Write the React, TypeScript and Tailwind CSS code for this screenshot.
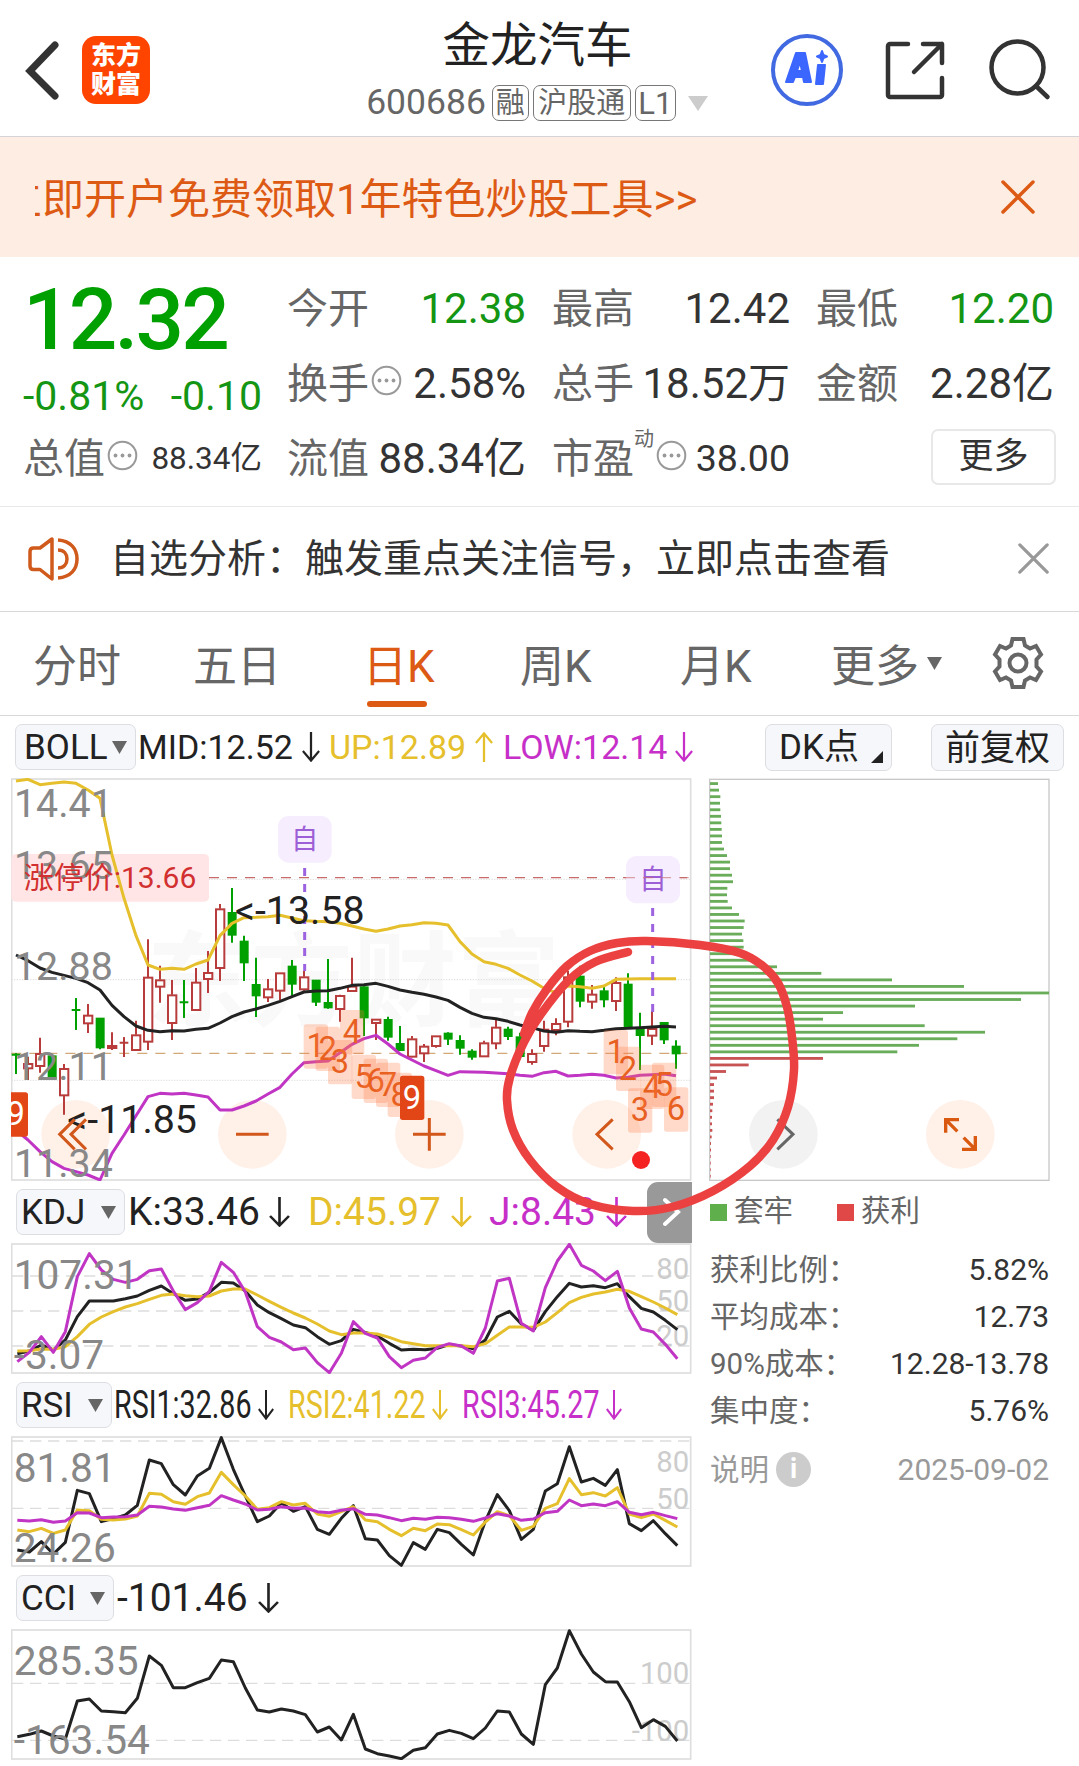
import type { ReactNode } from 'react';
import clsx from 'clsx';

// Chart viewBoxes use 3 units per CSS pixel; candles are 36 units apart.
const STEP = 36;
const FONT = "Roboto, 'Noto Sans CJK SC', sans-serif";

const UP = [33, 28, 44, 40, 36, 40, 60, 85, 255, 385, 497, 585, 598, 595, 598, 582, 570, 497, 460, 443, 442, 440, 436, 444, 452, 454, 455, 460, 468, 477, 484, 477, 468, 464, 458, 460, 465, 515, 552, 575, 583, 595, 615, 633, 655, 668, 648, 650, 655, 648, 628, 627, 626, 626, 626, 626];
const MID = [555, 572, 594, 607, 616, 625, 638, 660, 706, 740, 768, 781, 785, 782, 783, 778, 775, 759, 740, 726, 717, 706, 694, 680, 666, 663, 662, 655, 646, 644, 640, 649, 660, 667, 673, 681, 691, 712, 730, 742, 746, 754, 765, 773, 783, 787, 782, 784, 785, 781, 776, 775, 773, 771, 769, 771];
const LOW = [1080, 1110, 1145, 1175, 1195, 1205, 1215, 1230, 1150, 1095, 1037, 980, 970, 972, 970, 975, 981, 1020, 1020, 1008, 993, 972, 952, 912, 878, 875, 873, 848, 823, 806, 796, 822, 852, 870, 888, 902, 916, 905, 906, 907, 909, 911, 916, 919, 908, 904, 918, 916, 913, 916, 924, 922, 916, 914, 912, 917];

const K = [521, 513, 495, 510, 480, 410, 363, 363, 363, 356, 348, 331, 318, 341, 361, 357, 337, 307, 309, 333, 375, 398, 416, 435, 443, 470, 493, 482, 448, 457, 468, 490, 510, 508, 509, 505, 494, 498, 506, 480, 411, 394, 432, 451, 395, 350, 310, 321, 317, 323, 311, 350, 385, 396, 421, 449];
const D = [513, 512, 507, 508, 500, 470, 433, 411, 395, 381, 371, 358, 346, 342, 347, 350, 348, 333, 327, 327, 345, 364, 382, 399, 414, 432, 453, 464, 459, 459, 462, 472, 485, 491, 497, 497, 497, 497, 500, 491, 466, 441, 441, 442, 426, 398, 368, 352, 342, 336, 328, 334, 350, 366, 384, 404];
const J = [545, 517, 470, 517, 455, 290, 221, 270, 298, 307, 298, 272, 267, 333, 389, 368, 334, 247, 277, 336, 440, 472, 486, 509, 504, 548, 578, 520, 425, 460, 474, 530, 563, 541, 534, 502, 491, 498, 520, 444, 303, 295, 430, 453, 323, 243, 193, 256, 273, 302, 274, 384, 447, 456, 493, 536];

const RSI1 = [1110, 1116, 1085, 1122, 1087, 931, 941, 1025, 1016, 1005, 976, 840, 851, 914, 945, 888, 865, 773, 868, 948, 1025, 1008, 968, 994, 980, 1048, 1063, 1015, 977, 1076, 1080, 1127, 1156, 1088, 1108, 1048, 1058, 1093, 1125, 1023, 944, 992, 1078, 1048, 933, 911, 800, 906, 895, 916, 869, 1031, 1052, 1022, 1061, 1097];
const RSI2 = [1050, 1055, 1045, 1060, 1050, 990, 992, 1018, 1020, 1017, 1008, 940, 943, 965, 973, 950, 939, 877, 914, 948, 988, 983, 965, 975, 970, 1002, 1009, 995, 980, 1020, 1025, 1048, 1067, 1045, 1052, 1032, 1034, 1049, 1065, 1026, 995, 1007, 1051, 1039, 985, 971, 896, 944, 938, 948, 923, 1002, 1013, 1002, 1021, 1041];
const RSI3 = [1021, 1023, 1019, 1027, 1023, 998, 999, 1013, 1011, 1010, 1005, 979, 981, 987, 991, 983, 976, 947, 960, 972, 990, 988, 980, 985, 984, 995, 998, 991, 986, 1003, 1005, 1013, 1022, 1015, 1018, 1012, 1013, 1018, 1024, 1014, 1001, 1008, 1021, 1017, 998, 994, 960, 977, 972, 977, 965, 997, 1004, 997, 1007, 1016];

const CCI = [560, 553, 543, 558, 567, 453, 447, 483, 485, 488, 445, 318, 346, 413, 413, 398, 385, 330, 335, 414, 480, 486, 477, 483, 494, 546, 531, 570, 493, 597, 611, 618, 626, 601, 593, 552, 541, 550, 566, 534, 483, 486, 552, 583, 404, 354, 242, 312, 366, 395, 396, 455, 533, 509, 529, 573];

type Candle = ['r' | 'g', number, number, number, number];

// side, high, body top, body bottom, low
const CANDLES: Candle[] = [
  ['g', 850, 854, 856, 912], ['r', 860, 880, 895, 930], ['r', 803, 850, 888, 908], ['g', 857, 857, 925, 928],
  ['r', 882, 895, 976, 1034], ['g', 685, 720, 722, 779], ['r', 702, 735, 760, 789], ['g', 744, 744, 832, 838],
  ['r', 787, 826, 834, 840], ['r', 802, 818, 820, 861], ['r', 752, 794, 840, 840], ['r', 508, 621, 815, 840],
  ['r', 587, 629, 650, 698], ['r', 630, 674, 759, 810], ['g', 630, 697, 699, 743], ['r', 594, 636, 720, 720],
  ['r', 543, 607, 627, 669], ['r', 402, 416, 594, 633], ['g', 354, 427, 494, 518], ['g', 497, 513, 577, 633],
  ['g', 563, 643, 676, 741], ['r', 627, 656, 682, 696], ['r', 608, 608, 662, 690], ['g', 570, 588, 641, 677],
  ['r', 603, 620, 658, 662], ['g', 630, 630, 695, 708], ['g', 567, 697, 712, 716], ['r', 674, 676, 717, 755],
  ['r', 563, 648, 663, 663], ['g', 645, 650, 742, 798], ['r', 747, 747, 759, 810], ['g', 740, 748, 800, 812],
  ['g', 768, 820, 840, 842], ['r', 798, 806, 860, 862], ['r', 822, 828, 850, 876], ['r', 797, 797, 828, 833],
  ['g', 787, 789, 806, 825], ['g', 796, 811, 833, 854], ['g', 838, 843, 860, 869], ['r', 812, 818, 859, 859],
  ['r', 747, 771, 820, 838], ['g', 770, 777, 798, 810], ['g', 788, 800, 858, 868], ['r', 838, 850, 876, 884],
  ['r', 752, 777, 828, 845], ['r', 745, 760, 780, 796], ['r', 602, 620, 755, 772], ['g', 587, 618, 692, 712],
  ['r', 645, 672, 695, 716], ['g', 650, 662, 688, 712], ['r', 622, 637, 693, 723], ['g', 610, 642, 772, 772],
  ['g', 728, 775, 795, 900], ['r', 723, 775, 797, 825], ['g', 757, 757, 808, 822], ['g', 811, 828, 850, 896],
];

const TD_MARKS: [string, number, number][] = [
  ['1', 911, 763], ['2', 947, 770], ['3', 984, 810], ['4', 1020, 720], ['5', 1055, 854], ['6', 1091, 866],
  ['7', 1128, 878], ['8', 1163, 908], ['9', 1200, 917], ['9', 11, 967],
  ['1', 1811, 780], ['2', 1848, 830], ['3', 1884, 955], ['4', 1920, 884], ['5', 1956, 878], ['6', 1992, 952],
];

const CHIPS = [54, 57, 61, 60, 61, 63, 64, 65, 66, 66, 72, 81, 90, 90, 96, 99, 82, 81, 83, 96, 117, 134, 131, 126, 130, 131, 144, 165, 231, 364, 576, 792, 1047, 963, 645, 429, 369, 674, 855, 772, 657, 592, 369, 146, 78, 51, 42, 42, 42, 39, 37, 36, 36, 37, 35, 33, 33, 32, 32, 32, 32];
const FIRST_PROFIT_ROW = 42;

const MARKER: [number, number][] = [
  [628, 952], [595, 962], [569, 980], [541, 1014], [524, 1042], [510, 1077], [507, 1100], [513, 1130], [530, 1160],
  [557, 1187], [590, 1204], [633, 1211], [672, 1207], [713, 1191], [750, 1166], [773, 1140], [788, 1107], [794, 1070],
  [792, 1037], [787, 1007], [778, 983], [763, 966], [740, 953], [700, 945], [647, 941], [617, 943], [590, 951],
  [567, 966], [547, 989], [532, 1013], [524, 1034],
];

const toPoints = (values: number[], x0: number) => values.map((y, i) => `${x0 + i * STEP},${y}`).join(' ');

function smooth(pts: [number, number][]) {
  let d = `M${pts[0][0]} ${pts[0][1]}`;
  for (let i = 0; i < pts.length - 1; i++) {
    const a = pts[i - 1] ?? pts[i];
    const b = pts[i];
    const c = pts[i + 1];
    const e = pts[i + 2] ?? c;
    d += ` C${b[0] + (c[0] - a[0]) / 6} ${b[1] + (c[1] - a[1]) / 6} ${c[0] - (e[0] - b[0]) / 6} ${c[1] - (e[1] - b[1]) / 6} ${c[0]} ${c[1]}`;
  }
  return d;
}

function Header() {
  return (
    <header className="flex h-[137px] items-center border-b border-[#d3d3d8] pt-[3px]">
      <svg className="ml-[24px] w-[36px] h-[60px] shrink-0" viewBox="0 0 36 60" fill="none" stroke="#333" strokeWidth="7">
        <path d="M31 5 6 31l25 25" strokeLinecap="round" strokeLinejoin="miter" />
      </svg>
      <div className="ml-[22px] flex h-[68px] w-[68px] shrink-0 flex-col items-center justify-center rounded-[14px] bg-[#ff4400] text-[25px] font-black leading-[29px] text-white">
        <span>东方</span>
        <span>财富</span>
      </div>
      <div className="flex flex-1 flex-col items-center pl-[155px]">
        <h1 className="mt-[2px] whitespace-nowrap text-[47.500px] leading-[54px] text-[#222]">金龙汽车</h1>
        <div className="mt-[11px] flex h-[38px] items-center gap-[4px] whitespace-nowrap text-[29px] leading-none text-[#666]">
          <span className="mr-[2px] text-[35.5px]">600686</span>
          <span className="flex h-[36px] w-[37px] items-center justify-center rounded-[7px] border border-[#777]">融</span>
          <span className="flex h-[36px] w-[98px] items-center justify-center rounded-[7px] border border-[#777]">沪股通</span>
          <span className="flex h-[36px] w-[41px] items-center justify-center rounded-[7px] border border-[#777] text-[31px]">L1</span>
          <svg className="ml-[7px] h-[15px] w-[22px]" viewBox="0 0 22 15" fill="#ccc">
            <path d="M1 0h20L11 15z" />
          </svg>
        </div>
      </div>
      <svg className="h-[74px] w-[74px] shrink-0" viewBox="0 0 74 74">
        <circle cx="37" cy="37" r="34" fill="none" stroke="#4169e1" strokeWidth="4" />
        <g fill="#3b66ff" stroke="#3b66ff" strokeWidth="2" strokeLinejoin="round">
          <path fillRule="evenodd" d="M26 20h9l6 29h-7l-1-5h-8l-2 5h-7zM30 29l-3 9h5z" />
          <path d="M48 32h7l-2 19h-7z" />
          <path d="m52 18 1.500 4 3.500 1.500-3.500 1.500-1.500 4-1.500-4-3.500-1.500 3.500-1.500z" />
        </g>
      </svg>
      <svg className="ml-[41px] h-[62px] w-[62px] shrink-0" viewBox="0 0 62 62" fill="none" stroke="#333" strokeWidth="4.500" strokeLinecap="round" strokeLinejoin="round">
        <path d="M23 5H5a2 2 0 0 0-2 2v49a2 2 0 0 0 2 2h50a2 2 0 0 0 2-2V39" />
        <path d="M38 5h19v19M57 5 29 33" />
      </svg>
      <svg className="ml-[40px] mr-[28px] h-[64px] w-[64px] shrink-0" viewBox="0 0 64 64" fill="none" stroke="#333" strokeWidth="4.500" strokeLinecap="round">
        <circle cx="30.500" cy="29.500" r="26" />
        <path d="m49 48 11.500 11" />
      </svg>
    </header>
  );
}

function Banner() {
  return (
    <div className="flex h-[120px] items-center justify-between bg-[#fdede3] pl-[35px] pr-[44px]">
      <div className="overflow-hidden pt-[5px]">
        <p className="-ml-[35px] whitespace-nowrap text-[42px] leading-[60px] text-[#dd5a14]">立即开户免费领取1年特色炒股工具&gt;&gt;</p>
      </div>
      <CloseIcon className="h-[34px] w-[34px] text-[#dd5a14]" />
    </div>
  );
}

function CloseIcon({ className }: { className: string }) {
  return (
    <svg className={className} viewBox="0 0 34 34" fill="none" stroke="currentColor" strokeWidth="3.500" strokeLinecap="round">
      <path d="m2 2 30 30M32 2 2 32" />
    </svg>
  );
}

function MoreDots() {
  return (
    <svg className="h-[31px] w-[31px] shrink-0" viewBox="0 0 31 31">
      <circle cx="15.500" cy="15.500" r="13.800" fill="none" stroke="#999" strokeWidth="2" />
      <g fill="#999">
        <circle cx="8.500" cy="15.500" r="1.900" />
        <circle cx="15.500" cy="15.500" r="1.900" />
        <circle cx="22.500" cy="15.500" r="1.900" />
      </g>
    </svg>
  );
}

interface QuoteCellProps {
  label: string;
  value: string;
  green?: boolean;
  dots?: boolean;
  sup?: string;
  size?: string;
}

function QuoteCell({ label, value, green, dots, sup, size = 'text-[42px]' }: QuoteCellProps) {
  return (
    <div className="flex h-[75px] items-center justify-between whitespace-nowrap leading-none">
      <div className="flex items-center text-[41px] text-[#666]">
        <span className="pt-[2px]">{label}</span>
        {sup && <sup className="self-start text-[20px] leading-none -top-[8px]">{sup}</sup>}
        {dots && <div className="-mt-[6px] ml-[2px]"><MoreDots /></div>}
      </div>
      <span className={clsx(size, green ? 'text-[#149614]' : 'text-[#333]')}>{value}</span>
    </div>
  );
}

function Quote() {
  return (
    <section className="flex h-[250px] border-b border-[#e8e8e8] pl-[23px] pr-[25px] pt-[14px]">
      <div className="w-[239px]">
        <div className="flex h-[100px] items-center text-[85.500px] font-medium leading-none tracking-[-2.800px] text-[#00a000]">12.32</div>
        <div className="flex h-[50px] items-center justify-between text-[41px] leading-none text-[#149614]">
          <span>-0.81%</span>
          <span>-0.10</span>
        </div>
        <QuoteCell label="总值" value="88.34亿" dots size="text-[31.5px]" />
      </div>
      <div className="ml-[25px] grid flex-1 grid-cols-[239px_238px_238px] content-start gap-x-[26px]">
        <QuoteCell label="今开" value="12.38" green />
        <QuoteCell label="最高" value="12.42" />
        <QuoteCell label="最低" value="12.20" green />
        <QuoteCell label="换手" value="2.58%" dots />
        <QuoteCell label="总手" value="18.52万" />
        <QuoteCell label="金额" value="2.28亿" />
        <QuoteCell label="流值" value="88.34亿" />
        <QuoteCell label="市盈" value="38.00" sup="动" dots size="text-[37.5px]" />
        <div className="flex h-[71px] items-center justify-end">
          <button className="-mr-[2px] h-[56px] w-[125px] rounded-[7px] border-2 border-[#e8e8e8] text-[35px] leading-none text-[#333]">更多</button>
        </div>
      </div>
    </section>
  );
}

function Notice() {
  return (
    <section className="flex h-[105px] items-center border-b border-[#d8d8d8] pl-[27px] pr-[30px]">
      <svg className="h-[46px] w-[54px]" viewBox="0 0 54 46" fill="none" stroke="#d05a1c" strokeWidth="3.500" strokeLinejoin="round">
        <path d="M25 3v40L13 33.500H6.500Q3 33.500 3 30V15.500Q3 12 6.500 12H13z" />
        <path d="M31 4c13 1 19 9 19 19s-6 18-19 19M31 14c6 0 9 4 9 9s-3 9-9 9" />
      </svg>
      <p className="ml-[29px] flex-1 whitespace-nowrap text-[39px] leading-[56px] text-[#333]">自选分析：触发重点关注信号，立即点击查看</p>
      <CloseIcon className="-mt-[2px] h-[31px] w-[31px] text-[#999]" />
    </section>
  );
}

function Tabs() {
  const tabs = [
    { label: '分时', pad: 'w-[160px]' },
    { label: '五日', pad: 'w-[173px]' },
    { label: '日K', pad: 'w-[154px]' },
    { label: '周K', pad: 'w-[160px]' },
    { label: '月K', pad: 'w-[151px]' },
  ];

  return (
    <nav className="flex h-[104px] items-center border-b border-[#d8d8d8] pl-[33px] text-[44px] leading-none text-[#666]">
      {tabs.map((tab) => {
        const active = tab.label === '日K';
        return (
          <div key={tab.label} className={clsx('flex h-full flex-col justify-between', tab.pad)}>
            <span className={clsx('pt-[33px]', active && '-ml-[3px] text-[#dd5a14]')}>{tab.label}</span>
            {active && <span className="mb-[8px] ml-px h-[6px] w-[60px] rounded-full bg-[#dd5a14]" />}
          </div>
        );
      })}
      <div className="flex h-full w-[159px] items-start pt-[33px]">
        更多
        <svg className="ml-[8px] mt-[12px] h-[13px] w-[15px]" viewBox="0 0 15 13" fill="#666"><path d="M0 0h15L7.500 13z" /></svg>
      </div>
      <svg className="-mt-px h-[56px] w-[56px]" viewBox="-28 -28 56 56" fill="none" stroke="#666" strokeWidth="4" strokeLinejoin="miter">
        <path d="M-5.500 -24H5.500L7 -17.500L12 -14.500L18 -17L23 -8.500L18.500 -3.500V3.500L23 8.500L18 17L12 14.500L7 17.500L5.500 24H-5.500L-7 17.500L-12 14.500L-18 17L-23 8.500L-18.500 3.500V-3.500L-23 -8.500L-18 -17L-12 -14.500L-7 -17.500Z" />
        <circle r="8.500" />
      </svg>
    </nav>
  );
}

function Arrow({ up, className }: { up?: boolean; className: string }) {
  return (
    <svg className={clsx('h-[30px] shrink-0', up && 'rotate-180', className)} viewBox="0 0 20 30" preserveAspectRatio="none" fill="none" stroke="currentColor" strokeWidth="2.500">
      <path d="M10 0v28M1 19l9 9.500 9-9.500" />
    </svg>
  );
}

function PickerButton({ label, className }: { label: string; className: string }) {
  return (
    <button className={clsx('flex h-[46px] shrink-0 items-center justify-between rounded-[7px] border border-[#dcdee2] bg-[#f6f7fa] pr-[8px] text-[35px] leading-none text-[#222]', className)}>
      {label}
      <svg className="h-[13px] w-[15px]" viewBox="0 0 15 13" fill="#666"><path d="M0 0h15L7.500 13z" /></svg>
    </button>
  );
}

function BollBar() {
  return (
    <div className="flex h-[62px] items-center whitespace-nowrap pl-[15px] text-[34px] leading-none">
      <PickerButton label="BOLL" className="w-[121px] pl-[8px]" />
      <div className="flex w-[191px] items-center pl-[2px] text-[#222]">MID:12.52<Arrow className="ml-[9px] w-[18px]" /></div>
      <div className="flex w-[173px] items-center pl-[2px] text-[#e6c02c]">UP:12.89<Arrow up className="ml-[9px] w-[18px]" /></div>
      <div className="flex w-[265px] items-center pl-[3px] text-[#c62fc8]">LOW:12.14<Arrow className="ml-[8px] w-[18px]" /></div>
      <button className="flex h-[47px] w-[127px] items-center rounded-[7px] border border-[#dcdee2] bg-[#f6f7fa] pl-[13px] text-[35px] leading-none text-[#222]">
        DK点
        <svg className="ml-[12px] mt-[20px] h-[12px] w-[12px] shrink-0" viewBox="0 0 12 12"><path d="M12 0v12H0z" fill="#222" /></svg>
      </button>
      <button className="ml-[39px] flex h-[47px] w-[133px] items-center justify-center rounded-[7px] border border-[#dcdee2] bg-[#f6f7fa] pt-[2px] text-[35px] leading-none text-[#222]">前复权</button>
    </div>
  );
}

function MainChart() {
  return (
    <svg className="block h-[403px] w-[681px]" viewBox="33 24 2043 1209" fontFamily={FONT}>
      <text x="440" y="745" fontSize="310" fontWeight="700" fill="#f9f9f9">东方财富</text>
      <g stroke="#ccc" strokeWidth="2" strokeDasharray="4 4">
        <path d="M34 328H2073M34 629H2073M34 931H2073" />
      </g>
      <rect x="35" y="27" width="2037" height="1203" fill="none" stroke="#dedede" strokeWidth="5" />
      <rect x="34" y="252" width="593" height="143" rx="14" fill="#ffe5e5" />
      <path d="M627 323H2066" stroke="#c96a6a" strokeWidth="4" strokeDasharray="30 24" />
      <path d="M34 850H2066" stroke="#d3a878" strokeWidth="4" strokeDasharray="30 24" />
      <g fill="#fff0e8">
        <circle cx="227" cy="1093" r="103" />
        <circle cx="757" cy="1093" r="103" />
        <circle cx="1288" cy="1093" r="103" />
        <circle cx="1820" cy="1093" r="103" />
      </g>

      {CANDLES.map(([side, high, top, bottom, low], i) => {
        const x = 48 + i * STEP;
        const up = side === 'r';
        const color = up ? '#b83c3c' : '#00a000';
        return (
          <g key={i} stroke={color} strokeWidth="6">
            <path d={`M${x} ${high}V${top}M${x} ${bottom}V${low}`} />
            {bottom - top < 4 ? (
              <path d={`M${x - 13} ${top}H${x + 13}M${x} ${high}V${low}`} />
            ) : (
              <rect x={x - (up ? 12 : 10)} y={top + 2} width={up ? 25 : 21} height={Math.max(bottom - top - 2, 2)} fill={up ? '#fff' : color} />
            )}
          </g>
        );
      })}

      <g fill="none" strokeWidth="9" strokeLinejoin="round">
        <polyline points={toPoints(UP, 48)} stroke="#e6c02c" />
        <polyline points={toPoints(MID, 48)} stroke="#222" />
        <polyline points={toPoints(LOW, 48)} stroke="#c035c4" />
      </g>

      {TD_MARKS.map(([n, x, y], i) => (
        <g key={i}>
          <rect x={x} y={y} width="73" height="133" rx="8" fill={n === '9' ? '#e24516' : '#ff7a45'} fillOpacity={n === '9' ? 1 : 0.28} />
          <text x={x + 36} y={y + 99} textAnchor="middle" fontSize="98" fill={n === '9' ? '#fff' : '#e8601f'}>{n}</text>
        </g>
      ))}

      <g stroke="#9d62df" strokeWidth="9" strokeDasharray="24 24">
        <path d="M914 294V603M1958 414V735" />
      </g>
      <rect x="834" y="138" width="161" height="140" rx="32" fill="#f6edff" />
      <rect x="1878" y="258" width="162" height="142" rx="32" fill="#f6edff" />
      <g fontSize="82" fill="#9d5fd6" textAnchor="middle">
        <text x="914" y="236">自</text>
        <text x="1959" y="358">自</text>
      </g>
      <path d="M1875 323H2066" stroke="#c96a6a" strokeOpacity="0.600" strokeWidth="4" strokeDasharray="30 24" />

      <g fontSize="118" fill="#888">
        <text x="42" y="141">14.41</text>
        <text x="42" y="326">13.65</text>
        <text x="42" y="630">12.88</text>
        <text x="42" y="931">12.11</text>
        <text x="42" y="1221">11.34</text>
      </g>
      <text x="71" y="354" fontSize="90" fill="#d23030">涨停价:13.66</text>
      <g fontSize="118" fill="#222">
        <text x="705" y="462">&lt;-13.58</text>
        <text x="202" y="1089">&lt;-11.85</text>
      </g>

      <g fill="none" stroke="#d2571a" strokeWidth="9">
        <path d="M258 1048L213 1093L258 1138M224 1048L179 1093L224 1138" />
        <path d="M708 1093H806M1239 1093H1337M1288 1044V1142" />
        <path d="M1838 1048L1791 1093L1838 1138" />
      </g>
      <circle cx="1923" cy="1170" r="27" fill="#f52222" />
    </svg>
  );
}

interface SubChartProps {
  top: number;
  grid: number[];
  lines: { values: number[]; color: string }[];
  labels: { text: string; y: number }[];
  marks: { text: string; y: number }[];
}

function SubChart({ top, grid, lines, labels, marks }: SubChartProps) {
  return (
    <svg className="block h-[131px] w-[681px]" viewBox={`33 ${top} 2043 393`} fontFamily={FONT}>
      {grid.map((y) => (
        <path key={y} d={`M36 ${y}H2072`} stroke="#ddd" strokeWidth="4" strokeDasharray="34 20" />
      ))}
      <rect x="35" y={top + 3} width="2037" height="387" fill="none" stroke="#dedede" strokeWidth="5" />
      <g fill="#ccc" fontSize="88" textAnchor="end">
        {marks.map((m) => <text key={m.text} x="2068" y={m.y + 1}>{m.text}</text>)}
      </g>
      {lines.map((line) => (
        <polyline key={line.color} points={toPoints(line.values, 52)} fill="none" stroke={line.color} strokeWidth="9" strokeLinejoin="round" />
      ))}
      <g fill="#888" fontSize="122">
        {labels.map((l) => <text key={l.text} x="41" y={l.y}>{l.text}</text>)}
      </g>
    </svg>
  );
}

function IndicatorBar({ children }: { children: ReactNode }) {
  return <div className="flex h-[62px] items-center whitespace-nowrap pl-[5px] text-[39px] leading-none text-[#222]">{children}</div>;
}

// RSI readings are squeezed so that three fit on the line
function Squeezed({ text, className }: { text: string; className: string }) {
  return (
    <div className={clsx('flex w-[174px] shrink-0 items-center', className)}>
      <span className="w-[144px] shrink-0"><span className="inline-block origin-left scale-x-[0.735]">{text}</span></span>
      <Arrow className="w-[16px]" />
    </div>
  );
}

function ChipChart() {
  return (
    <svg className="block h-[403px] w-[342px]" viewBox="27 24 1026 1209" fill="none">
      <rect x="29" y="28" width="1018" height="1203" stroke="#c8c8c8" strokeWidth="4" />
      <circle cx="250" cy="1093" r="103" fill="#f2f2f2" />
      <circle cx="781" cy="1093" r="103" fill="#fff0e8" />
      {CHIPS.map((end, i) => (
        <rect key={i} x="30" y={36.500 + i * 19.630} width={end - 30} height="8.500" fill={i < FIRST_PROFIT_ROW ? '#69ac5a' : '#c75353'} />
      ))}
      <path d="M232 1048L279 1093L232 1138" stroke="#666" strokeWidth="9" />
      <g stroke="#d8590f" strokeWidth="10">
        <path d="M777 1049H737V1088M737 1049L772 1084" />
        <path d="M786 1138H826V1098M826 1138L791 1103" />
      </g>
    </svg>
  );
}

function ChipStats() {
  const rows = [
    ['获利比例：', '5.82%'],
    ['平均成本：', '12.73'],
    ['90%成本：', '12.28-13.78'],
    ['集中度：', '5.76%'],
  ];

  return (
    <div className="w-[340px] pl-px text-[29.500px] leading-none text-[#666]">
      <div className="flex h-[62px] items-center">
        <span className="h-[17px] w-[17px] bg-[#5fb04c]" />
        <span className="ml-[7px]">套牢</span>
        <span className="ml-[44px] h-[17px] w-[17px] bg-[#e04848]" />
        <span className="ml-[7px]">获利</span>
      </div>
      <div className="pt-[3px]">
        {rows.map(([label, value]) => (
          <div key={label} className="flex h-[47px] items-center justify-between">
            <span className="pt-[2px]">{label}</span>
            <span className="text-[30px] text-[#333]">{value}</span>
          </div>
        ))}
      </div>
      <div className="mt-[12px] flex h-[47px] items-center justify-between text-[#999]">
        <div className="flex items-center">
          <span className="pt-[2px]">说明</span>
          <span className="ml-[7px] flex h-[35px] w-[35px] items-center justify-center rounded-full bg-[#ccc] text-[27px] font-bold text-white">i</span>
        </div>
        <span className="pt-px text-[30px]">2025-09-02</span>
      </div>
    </div>
  );
}

export default function App() {
  return (
    <div className="relative h-[1766px] w-[1079px] overflow-hidden bg-white font-[Roboto,'Noto_Sans_CJK_SC',sans-serif]">
      <Header />
      <Banner />
      <Quote />
      <Notice />
      <Tabs />
      <BollBar />

      <main className="flex gap-[17px] pl-[11px]">
        <div className="w-[681px] shrink-0">
          <MainChart />

          <IndicatorBar>
            <PickerButton label="KDJ" className="w-[109px] pl-[4px]" />
            <div className="flex w-[180px] items-center pl-[3px]">K:33.46<Arrow className="ml-[9px] w-[21px]" /></div>
            <div className="flex w-[181px] items-center pl-[3px] text-[#e6c02c]">D:45.97<Arrow className="ml-[10px] w-[21px]" /></div>
            <div className="flex w-[161px] items-center pl-[3px] text-[#c62fc8]">J:8.43<Arrow className="ml-[10px] w-[21px]" /></div>
            <button className="flex h-[61px] w-[45px] shrink-0 items-center justify-center rounded-l-[11px] bg-[#999]">
              <svg className="ml-[4px] h-[30px] w-[18px]" viewBox="0 0 18 30" fill="none" stroke="#fff" strokeWidth="4" strokeLinecap="round">
                <path d="m2 3 13 12L2 27" />
              </svg>
            </button>
          </IndicatorBar>
          <SubChart
            top={189}
            grid={[288, 393, 498]}
            lines={[{ values: K, color: '#222' }, { values: D, color: '#e6c02c' }, { values: J, color: '#c035c4' }]}
            labels={[{ text: '107.31', y: 326 }, { text: '-3.07', y: 566 }]}
            marks={[{ text: '80', y: 295 }, { text: '50', y: 391 }, { text: '20', y: 497 }]}
          />

          <IndicatorBar>
            <PickerButton label="RSI" className="w-[96px] pl-[4px]" />
            <Squeezed text="RSI1:32.86" className="ml-[2px]" />
            <Squeezed text="RSI2:41.22" className="text-[#e6c02c]" />
            <Squeezed text="RSI3:45.27" className="text-[#c62fc8]" />
          </IndicatorBar>
          <SubChart
            top={768}
            grid={[783, 985]}
            lines={[{ values: RSI1, color: '#222' }, { values: RSI2, color: '#e6c02c' }, { values: RSI3, color: '#c035c4' }]}
            labels={[{ text: '81.81', y: 905 }, { text: '24.26', y: 1145 }]}
            marks={[{ text: '80', y: 874 }, { text: '50', y: 985 }]}
          />

          <IndicatorBar>
            <PickerButton label="CCI" className="w-[98px] pl-[4px]" />
            <div className="flex items-center pl-[3px]">-101.46<Arrow className="ml-[10px] w-[21px]" /></div>
          </IndicatorBar>
          <SubChart
            top={237}
            grid={[400, 571]}
            lines={[{ values: CCI, color: '#222' }]}
            labels={[{ text: '285.35', y: 375 }, { text: '-163.54', y: 613 }]}
            marks={[{ text: '100', y: 399 }, { text: '-100', y: 573 }]}
          />
        </div>

        <aside>
          <ChipChart />
          <ChipStats />
        </aside>
      </main>

      {/* hand-drawn marker over the latest candles */}
      <svg className="pointer-events-none absolute left-0 top-0 h-[1766px] w-[1079px]" viewBox="0 0 1079 1766" fill="none">
        <path d={smooth(MARKER)} stroke="#ec4141" strokeWidth="8.500" strokeLinecap="round" strokeLinejoin="round" />
      </svg>
    </div>
  );
}
